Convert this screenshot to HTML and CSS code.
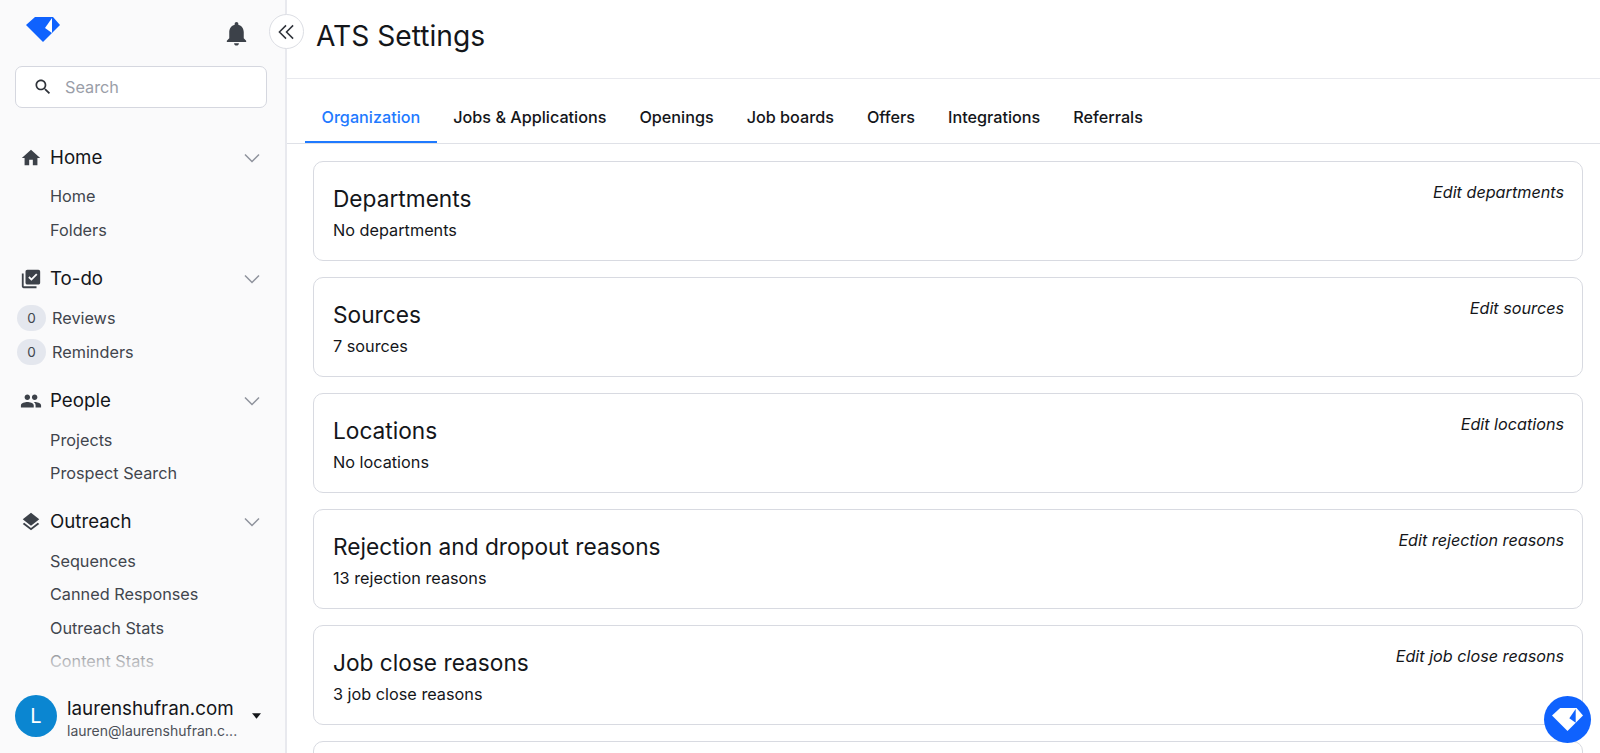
FILE: index.html
```html
<!DOCTYPE html>
<html lang="en">
<head>
<meta charset="utf-8">
<title>ATS Settings</title>
<link rel="stylesheet" href="styles.css">
</head>
<body>
<div class="app">
  <aside class="sidebar">
    <div class="brand-row">
      <svg class="logo" viewBox="0 0 34 25"><path fill="#0f62fe" d="M9 0H27L34 8L17 25L0 8Z"/><path fill="#fff" d="M19 11L26 1V16Z"/></svg>
      <svg class="bell" viewBox="0 0 24 24"><path d="M12 22c1.1 0 2-.9 2-2h-4c0 1.1.9 2 2 2zm6-6v-5c0-3.07-1.63-5.64-4.5-6.32V4c0-.83-.67-1.5-1.5-1.5s-1.5.67-1.5 1.5v.68C7.64 5.36 6 7.92 6 11v5l-2 2v1h16v-1l-2-2z"/></svg>
    </div>
    <div class="search">
      <svg class="search-icon" viewBox="0 0 24 24"><path d="M15.5 14h-.79l-.28-.27C15.41 12.59 16 11.11 16 9.5 16 5.91 13.09 3 9.5 3S3 5.91 3 9.5 5.91 16 9.5 16c1.61 0 3.09-.59 4.23-1.57l.27.28v.79l5 4.99L20.49 19l-4.99-5zm-6 0C7.01 14 5 11.99 5 9.5S7.01 5 9.5 5 14 7.01 14 9.5 11.99 14 9.5 14z"/></svg>
      <span>Search</span>
    </div>
    <nav class="nav">
      <section class="group">
        <div class="group-head">
          <svg class="group-icon" viewBox="0 0 24 24"><path d="M10 20v-6h4v6h5v-8h3L12 3 2 12h3v8z"/></svg>
          <span class="group-name">Home</span>
          <svg class="chev" viewBox="0 0 16 10"><path d="M1 1.5L8 8.5L15 1.5"/></svg>
        </div>
        <a class="item">Home</a>
        <a class="item">Folders</a>
      </section>
      <section class="group">
        <div class="group-head">
          <svg class="group-icon" viewBox="0 0 24 24"><path d="M20 2H8c-1.1 0-2 .9-2 2v12c0 1.1.9 2 2 2h12c1.1 0 2-.9 2-2V4c0-1.1-.9-2-2-2zm-7.53 12L9 10.5l1.4-1.41 2.07 2.08L17.6 6 19 7.41 12.47 14zM4 20h14v2H4c-1.1 0-2-.9-2-2V6h2v14z"/></svg>
          <span class="group-name">To-do</span>
          <svg class="chev" viewBox="0 0 16 10"><path d="M1 1.5L8 8.5L15 1.5"/></svg>
        </div>
        <a class="item item-count"><span class="count">0</span>Reviews</a>
        <a class="item item-count"><span class="count">0</span>Reminders</a>
      </section>
      <section class="group">
        <div class="group-head">
          <svg class="group-icon" viewBox="0 0 24 24"><path d="M16 11c1.66 0 2.99-1.34 2.99-3S17.66 5 16 5c-1.66 0-3 1.34-3 3s1.34 3 3 3zm-8 0c1.66 0 2.99-1.34 2.99-3S9.66 5 8 5C6.34 5 5 6.34 5 8s1.34 3 3 3zm0 2c-2.33 0-7 1.17-7 3.5V19h14v-2.5c0-2.33-4.67-3.5-7-3.5zm8 0c-.29 0-.62.02-.97.05 1.16.84 1.97 1.97 1.97 3.45V19h6v-2.5c0-2.33-4.67-3.5-7-3.5z"/></svg>
          <span class="group-name">People</span>
          <svg class="chev" viewBox="0 0 16 10"><path d="M1 1.5L8 8.5L15 1.5"/></svg>
        </div>
        <a class="item">Projects</a>
        <a class="item">Prospect Search</a>
      </section>
      <section class="group">
        <div class="group-head">
          <svg class="group-icon" viewBox="0 0 24 24"><path d="M11.99 18.54l-7.37-5.73L3 14.07l9 7 9-7-1.63-1.27-7.38 5.74zM12 16l7.36-5.73L21 9l-9-7-9 7 1.63 1.27L12 16z"/></svg>
          <span class="group-name">Outreach</span>
          <svg class="chev" viewBox="0 0 16 10"><path d="M1 1.5L8 8.5L15 1.5"/></svg>
        </div>
        <a class="item">Sequences</a>
        <a class="item">Canned Responses</a>
        <a class="item">Outreach Stats</a>
        <a class="item">Content Stats</a>
      </section>
      <div class="nav-fade"></div>
    </nav>
    <div class="account">
      <div class="avatar">L</div>
      <div class="account-text">
        <div class="account-name">laurenshufran.com</div>
        <div class="account-mail">lauren@laurenshufran.c...</div>
      </div>
      <svg class="caret" viewBox="0 0 10 6"><path d="M0 0H10L5 6Z"/></svg>
    </div>
  </aside>
  <button class="collapse" type="button" aria-label="Collapse">
    <svg viewBox="0 0 18 16"><path d="M8.5 1L1.5 8L8.5 15M16 1L9 8L16 15"/></svg>
  </button>
  <main class="main">
    <header class="page-head"><h1>ATS Settings</h1></header>
    <div class="tabs">
      <a class="tab active">Organization</a>
      <a class="tab">Jobs &amp; Applications</a>
      <a class="tab">Openings</a>
      <a class="tab">Job boards</a>
      <a class="tab">Offers</a>
      <a class="tab">Integrations</a>
      <a class="tab">Referrals</a>
    </div>
    <div class="cards">
      <article class="card"><div><h2>Departments</h2><p>No departments</p></div><a class="edit">Edit departments</a></article>
      <article class="card"><div><h2>Sources</h2><p>7 sources</p></div><a class="edit">Edit sources</a></article>
      <article class="card"><div><h2>Locations</h2><p>No locations</p></div><a class="edit">Edit locations</a></article>
      <article class="card"><div><h2>Rejection and dropout reasons</h2><p>13 rejection reasons</p></div><a class="edit">Edit rejection reasons</a></article>
      <article class="card"><div><h2>Job close reasons</h2><p>3 job close reasons</p></div><a class="edit">Edit job close reasons</a></article>
      <article class="card"></article>
    </div>
  </main>
  <button class="fab" type="button" aria-label="Help">
    <svg viewBox="0 0 34 25"><path fill="#fff" d="M9 0H27L34 8L17 25L0 8Z"/><path fill="#0f62fe" d="M19 11L26 1V16Z"/></svg>
  </button>
</div>
</body>
</html>
```
FILE: styles.css
```css
* { box-sizing: border-box; }
html, body { margin: 0; height: 100%; overflow: hidden; }
body { font-family: Inter, "Liberation Sans", sans-serif; color: #14161a; background: #fff; }
.app { display: flex; height: 753px; position: relative; overflow: hidden; }

.sidebar { width: 287px; flex: none; height: 753px; background: #fafafb; border-right: 2px solid #e8e9ee; display: flex; flex-direction: column; overflow: hidden; }
.brand-row { height: 66px; flex: none; display: flex; justify-content: space-between; align-items: flex-start; padding: 17px 34px 0 26px; }
.logo { width: 34px; height: 25px; }
.bell { width: 29px; height: 29px; margin-top: 2px; fill: #3c4149; }
.search { flex: none; margin: 0 18px 0 15px; height: 42px; background: #fff; border: 1.5px solid #d5d7df; border-radius: 7px; display: flex; align-items: center; padding-left: 17px; gap: 12px; font-size: 16.25px; color: #9a9ea8; }
.search-icon { width: 20px; height: 20px; fill: #2f333a; }

.nav { flex: 1; min-height: 0; position: relative; padding-top: 33px; overflow: hidden; }
.group { margin-bottom: 15.3px; }
.group-head { height: 34px; display: flex; align-items: center; padding-left: 20px; margin-bottom: 4.5px; }
.group-icon { width: 22px; height: 22px; fill: #3c4149; flex: none; }
.group-name { font-size: 18.7px; line-height: 34px; margin-left: 8px; flex: 1; color: #14161a; }
.chev { width: 16px; height: 10px; margin-right: 25px; fill: none; stroke: #8e929c; stroke-width: 1.5; }
.item { display: flex; align-items: center; height: 33.6px; padding-left: 50px; font-size: 16.25px; color: #41454d; }
.item-count { padding-left: 17px; height: 34.3px; }
.count { width: 29px; height: 26px; border-radius: 13px; background: #e4e7ee; display: flex; align-items: center; justify-content: center; font-size: 13.5px; color: #41454d; margin-right: 6px; }
.nav-fade { position: absolute; left: 0; right: 0; bottom: 0; height: 46px; background: linear-gradient(to bottom, rgba(250,250,251,0), #fafafb); }

.account { flex: none; height: 74px; display: flex; align-items: center; padding: 0 0 0 15px; }
.avatar { width: 42px; height: 42px; border-radius: 50%; background: #0b86d1; color: #fff; display: flex; align-items: center; justify-content: center; font-size: 20px; flex: none; }
.account-text { margin-left: 10px; width: 181px; padding-top: 6px; }
.account-name { font-size: 18.8px; line-height: 22px; color: #14161a; }
.account-mail { font-size: 14px; line-height: 21px; color: #4c5058; white-space: nowrap; }
.caret { width: 9px; height: 6px; fill: #14161a; margin-left: 4px; }

.collapse { position: absolute; left: 269px; top: 14px; width: 35px; height: 35px; border-radius: 50%; background: #fff; border: 1.5px solid #dcdee4; padding: 0; display: flex; align-items: center; justify-content: center; z-index: 2; }
.collapse svg { width: 17px; height: 16px; fill: none; stroke: #2f333a; stroke-width: 1.6; }

.main { flex: 1; min-width: 0; overflow: hidden; }
.page-head { height: 79px; border-bottom: 1.5px solid #e8e9ee; display: flex; align-items: flex-start; padding: 18px 0 0 29px; }
h1 { margin: 0; font-size: 28.2px; line-height: 36px; font-weight: 400; color: #14161a; }
.tabs { height: 65px; border-bottom: 1.5px solid #dfe1e7; display: flex; align-items: flex-end; padding-left: 18px; }
.tab { height: 65px; display: flex; align-items: center; padding: 15px 16.5px 0; font-size: 16.2px; font-weight: 450; color: #14161a; border-bottom: 2px solid transparent; }
.tab.active { color: #1f7aff; border-bottom-color: #1f7aff; }
.cards { padding: 17px 17px 0 26px; display: flex; flex-direction: column; gap: 16px; }
.card { height: 100px; flex: none; background: #fff; border: 1.5px solid #d8dae1; border-radius: 10px; display: flex; justify-content: space-between; padding: 22px 18px 0 19px; }
h2 { margin: 0; font-size: 22.7px; line-height: 30px; font-weight: 400; color: #14161a; }
p { margin: 5px 0 0; font-size: 16.25px; line-height: 22px; color: #14161a; }
.edit { font-size: 16.2px; font-style: italic; line-height: 22px; margin-top: -3px; color: #14161a; }

.fab { position: absolute; left: 1544px; top: 696px; width: 47px; height: 47px; border-radius: 50%; background: #0f62fe; border: 0; padding: 0; display: flex; align-items: center; justify-content: center; z-index: 3; }
.fab svg { width: 31px; height: 23px; }
```
